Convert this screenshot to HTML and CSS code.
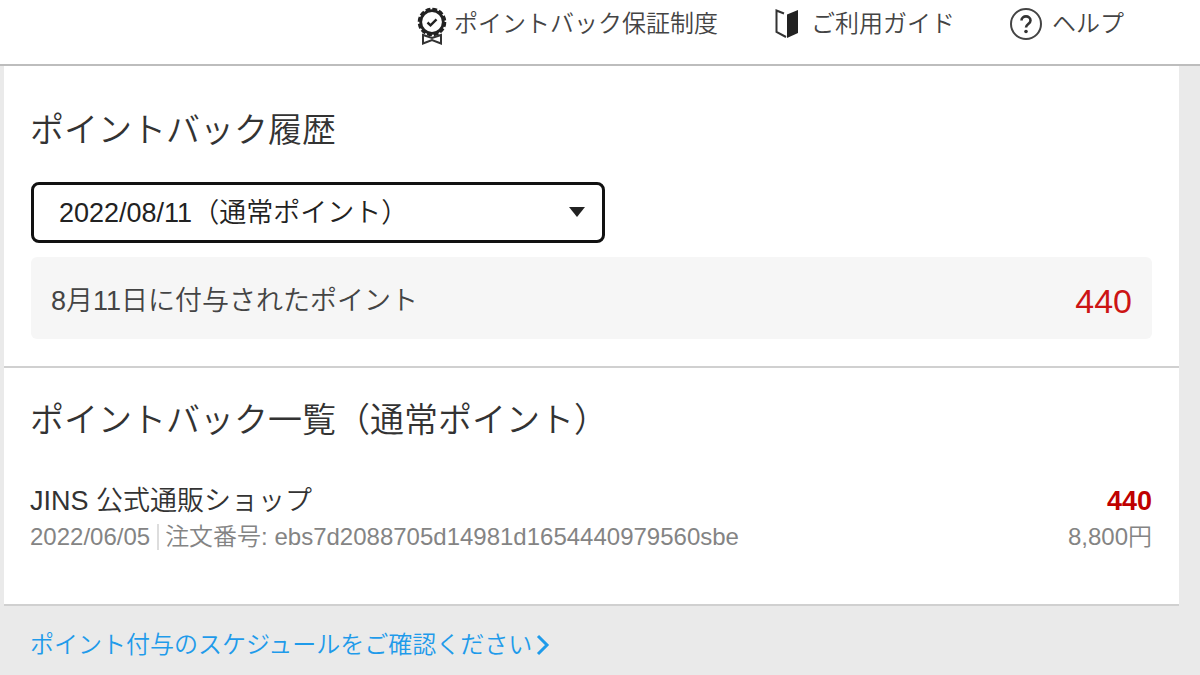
FILE: index.html
```html
<!DOCTYPE html>
<html lang="ja">
<head>
<meta charset="utf-8">
<meta name="viewport" content="width=device-width, initial-scale=1">
<title>ポイントバック履歴</title>
<link rel="stylesheet" href="styles.css">
</head>
<body>
<header class="header">
  <nav class="nav">
    <a class="nav-link nav-guarantee" href="#">
      <svg class="icon-badge" viewBox="0 0 30 38" aria-hidden="true">
        <path d="M6 28v8.500l9-3.500 9 3.500V28l-9 3z" fill="#fff" stroke="#333" stroke-width="2"/>
        <circle cx="15" cy="15" r="13" fill="#fff" stroke="#222" stroke-width="2.600" stroke-dasharray="4.800 2"/>
        <circle cx="15" cy="15" r="11.300" fill="#fff" stroke="#222" stroke-width="2.800"/>
        <path d="M10.500 15.500l3 2.800 6-6" fill="none" stroke="#222" stroke-width="2.400"/>
      </svg>
      <span>ポイントバック保証制度</span>
    </a>
    <a class="nav-link nav-guide" href="#">
      <svg class="icon-book" viewBox="0 0 24 30" aria-hidden="true">
        <path d="M9 4.500L1.500 1.500v21.500l9.500 5" fill="none" stroke="#333" stroke-width="2"/>
        <path d="M12 5.500L23 1v23l-11 5z" fill="#222"/>
      </svg>
      <span>ご利用ガイド</span>
    </a>
    <a class="nav-link nav-help" href="#">
      <svg class="icon-help" viewBox="0 0 34 34" aria-hidden="true">
        <circle cx="17" cy="17" r="15" fill="none" stroke="#444" stroke-width="2"/>
        <path d="M12.500 13.500c0-5.500 9-5.500 9 0 0 3.500-4.500 3.500-4.500 7" fill="none" stroke="#333" stroke-width="2.600"/>
        <circle cx="17" cy="24.500" r="1.800" fill="#333"/>
      </svg>
      <span>ヘルプ</span>
    </a>
  </nav>
</header>
<main class="main">
  <section class="panel">
    <h1 class="title"><label for="period">ポイントバック履歴</label></h1>
    <div class="picker">
      <select class="picker-select" id="period">
        <option>2022/08/11（通常ポイント）</option>
      </select>
      <svg class="picker-arrow" viewBox="0 0 16 10" aria-hidden="true"><path d="M0 0h16L8 10z" fill="#222"/></svg>
    </div>
    <div class="summary">
      <span>8月11日に付与されたポイント</span>
      <span class="summary-points">440</span>
    </div>
  </section>
  <section class="panel panel-list">
    <h2 class="title">ポイントバック一覧（通常ポイント）</h2>
    <article class="entry">
      <div class="entry-row">
        <h3 class="shop">JINS 公式通販ショップ</h3>
        <strong class="points">440</strong>
      </div>
      <div class="entry-row entry-meta">
        <div class="order">
          <span class="date">2022/06/05</span>
          <span class="number">注文番号: ebs7d2088705d14981d1654440979560sbe</span>
        </div>
        <span>8,800円</span>
      </div>
    </article>
  </section>
  <a class="schedule" href="#">
    <span>ポイント付与のスケジュールをご確認ください</span>
    <svg class="icon-chevron" viewBox="0 0 14 22" aria-hidden="true"><path d="M2 2l9 9-9 9" fill="none" stroke="#1f9bea" stroke-width="3"/></svg>
  </a>
</main>
</body>
</html>
```
FILE: styles.css
```css
* {
  box-sizing: border-box;
}

body {
  margin: 0;
  background: #eaeaea;
  color: #333;
  font-family: "Liberation Sans", "Noto Sans CJK JP", sans-serif;
  font-size: 27px;
  line-height: 36px;
  font-weight: 350;
}

.header {
  background: #fff;
  border-bottom: 2px solid #bdbdbd;
}

.nav {
  display: flex;
  justify-content: flex-end;
  gap: 54px;
  height: 64px;
  padding: 6px 76px 0 24px;
}

.nav-link {
  display: flex;
  align-items: center;
  gap: 9px;
  height: 36px;
  color: #444;
  font-size: 24px;
  text-decoration: none;
  white-space: nowrap;
}

.nav-guarantee {
  gap: 7px;
  margin-right: 3px;
}

.nav-guide {
  gap: 12px;
}

.icon-badge {
  width: 30px;
  height: 38px;
  margin-top: 4px;
}

.icon-book {
  width: 24px;
  height: 30px;
}

.icon-help {
  width: 34px;
  height: 34px;
}

.main {
  padding: 0 21px 12px 4px;
}

.panel {
  padding: 40px 27px 27px 26px;
  background: #fff;
  border-bottom: 2px solid #d0d0d0;
}

.panel-list {
  padding-top: 28px;
  padding-bottom: 49px;
}

.title {
  margin: 0;
  font-size: 34px;
  line-height: 48px;
  font-weight: 350;
}

.picker {
  position: relative;
  width: 52%;
  max-width: 574px;
  margin: 28px 0 14px 1px;
}

.picker-select {
  display: block;
  width: 100%;
  height: 61px;
  padding: 0 48px 0 25px;
  border: 3px solid #111;
  border-radius: 8px;
  appearance: none;
  background: #fff;
  color: #222;
  font: inherit;
}

.picker-arrow {
  position: absolute;
  top: 25px;
  right: 20px;
  width: 16px;
  height: 10px;
  pointer-events: none;
}

.summary {
  display: flex;
  align-items: center;
  justify-content: space-between;
  min-height: 82px;
  margin-left: 1px;
  padding: 8px 20px 2px;
  border-radius: 6px;
  background: #f6f6f6;
  color: #444;
}

.summary-points {
  color: #cc1414;
  font-size: 34px;
}

.entry {
  margin-top: 39px;
}

.entry-row {
  display: flex;
  justify-content: space-between;
}

.shop {
  margin: 0;
  font-size: 27px;
  font-weight: 350;
}

.points {
  color: #bf0000;
  font-weight: 700;
}

.entry-meta {
  color: #848484;
  font-size: 24px;
}

.order {
  display: flex;
  align-items: center;
}

.number {
  margin-left: 7px;
  padding-left: 6px;
  border-left: 2px solid #ddd;
  line-height: 26px;
}

.schedule {
  display: inline-flex;
  align-items: center;
  gap: 4px;
  margin: 21px 26px 0;
  color: #1f9bea;
  font-size: 24px;
  text-decoration: none;
}

.icon-chevron {
  width: 14px;
  height: 22px;
}
```
